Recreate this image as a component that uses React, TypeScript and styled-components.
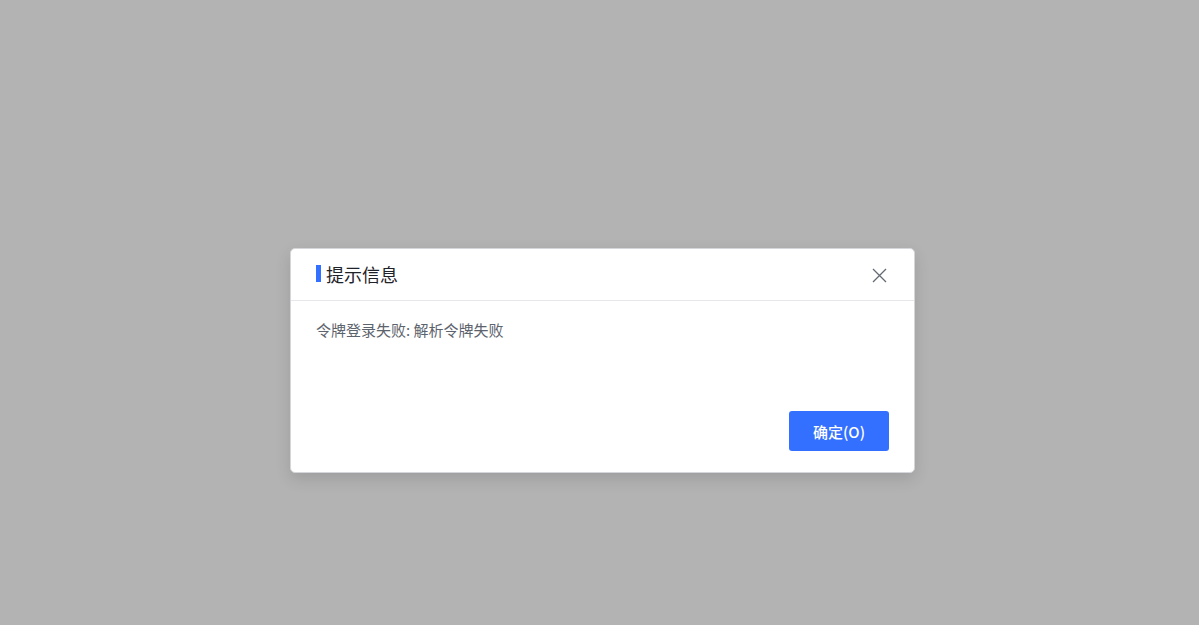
import React from 'react';
import styled, { createGlobalStyle } from 'styled-components';

const GlobalStyle = createGlobalStyle`
  html, body {
    margin: 0;
    padding: 0;
    height: 100%;
    background: #b3b3b3;
    font-family: "Noto Sans CJK SC", "Noto Sans", "Liberation Sans", sans-serif;
  }
  #root {
    height: 100%;
  }
`;

const Overlay = styled.div`
  width: 100%;
  height: 625px;
  background: #b3b3b3;
  box-sizing: border-box;
  padding: 248px 0 0 290px;
`;

const Dialog = styled.div`
  width: 625px;
  height: 225px;
  box-sizing: border-box;
  background: #fff;
  border: 1px solid #d4d6da;
  border-radius: 5px;
  box-shadow: 0 6px 16px rgba(0, 0, 0, 0.12);
  display: flex;
  flex-direction: column;
`;

const Header = styled.div`
  height: 52px;
  box-sizing: border-box;
  border-bottom: 1px solid #e5e7eb;
  display: flex;
  align-items: center;
  justify-content: space-between;
  padding: 0 27px 2px 25px;
`;

const Title = styled.div`
  display: flex;
  align-items: center;
  gap: 5px;
  font-size: 18px;
  line-height: 24px;
  color: #1f2329;
`;

const Bar = styled.span`
  width: 5px;
  height: 17px;
  background: #3370ff;
`;

const CloseButton = styled.button`
  border: none;
  background: none;
  padding: 0;
  margin-top: 3px;
  width: 16px;
  height: 16px;
  display: flex;
  align-items: center;
  justify-content: center;
  cursor: pointer;
  color: #646a73;
`;

const Body = styled.div`
  flex: 1;
  padding: 19px 25px 0;
  font-size: 15px;
  line-height: 20px;
  color: #5d636d;
`;

const Footer = styled.div`
  display: flex;
  justify-content: flex-end;
  padding: 0 25px 21px;
`;

const PrimaryButton = styled.button`
  width: 100px;
  height: 40px;
  border: none;
  border-radius: 3px;
  background: #3370ff;
  color: #fff;
  font-size: 15px;
  font-weight: 500;
  font-family: inherit;
  cursor: pointer;
`;

export default function App() {
  return (
    <>
      <GlobalStyle />
      <Overlay>
        <Dialog>
          <Header>
            <Title>
              <Bar />
              提示信息
            </Title>
            <CloseButton aria-label="关闭">
              <svg width="15" height="15" viewBox="0 0 15 15" fill="none">
                <path d="M1 1L14 14M14 1L1 14" stroke="currentColor" strokeWidth="1.3" />
              </svg>
            </CloseButton>
          </Header>
          <Body>令牌登录失败: 解析令牌失败</Body>
          <Footer>
            <PrimaryButton>确定(O)</PrimaryButton>
          </Footer>
        </Dialog>
      </Overlay>
    </>
  );
}
